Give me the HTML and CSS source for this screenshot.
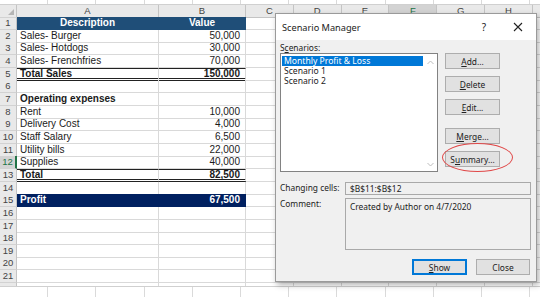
FILE: index.html
```html
<!DOCTYPE html>
<html lang="en">
<head>
    <meta charset="UTF-8">
    <title>Scenario Manager</title>
    <link rel="stylesheet" href="styles.css">
</head>
<body>
    <div class="strip"></div>
    <div class="sheet">
        <div class="row head">
            <div class="rh corner"><span class="tri"></span></div>
            <div class="c">A</div>
            <div class="c">B</div>
            <div class="rest cols">
                <span>C</span><span>D</span><span>E</span><span class="sel">F</span><span>G</span><span>H</span>
            </div>
        </div>
        <div class="row">
            <div class="rh">1</div>
            <div class="c th">Description</div>
            <div class="c th">Value</div>
            <div class="rest"></div>
        </div>
        <div class="row">
            <div class="rh">2</div>
            <div class="c">Sales- Burger</div>
            <div class="c num">50,000</div>
            <div class="rest"></div>
        </div>
        <div class="row">
            <div class="rh">3</div>
            <div class="c">Sales- Hotdogs</div>
            <div class="c num">30,000</div>
            <div class="rest"></div>
        </div>
        <div class="row">
            <div class="rh">4</div>
            <div class="c">Sales- Frenchfries</div>
            <div class="c num">70,000</div>
            <div class="rest"></div>
        </div>
        <div class="row">
            <div class="rh">5</div>
            <div class="c total">Total Sales</div>
            <div class="c num total">150,000</div>
            <div class="rest"></div>
        </div>
        <div class="row">
            <div class="rh">6</div>
            <div class="c"></div>
            <div class="c"></div>
            <div class="rest"></div>
        </div>
        <div class="row">
            <div class="rh">7</div>
            <div class="c bold">Operating expenses</div>
            <div class="c"></div>
            <div class="rest"></div>
        </div>
        <div class="row">
            <div class="rh">8</div>
            <div class="c">Rent</div>
            <div class="c num">10,000</div>
            <div class="rest"></div>
        </div>
        <div class="row">
            <div class="rh">9</div>
            <div class="c">Delivery Cost</div>
            <div class="c num">4,000</div>
            <div class="rest"></div>
        </div>
        <div class="row">
            <div class="rh">10</div>
            <div class="c">Staff Salary</div>
            <div class="c num">6,500</div>
            <div class="rest"></div>
        </div>
        <div class="row">
            <div class="rh">11</div>
            <div class="c">Utility bills</div>
            <div class="c num">22,000</div>
            <div class="rest"></div>
        </div>
        <div class="row">
            <div class="rh sel">12</div>
            <div class="c">Supplies</div>
            <div class="c num">40,000</div>
            <div class="rest"></div>
        </div>
        <div class="row">
            <div class="rh">13</div>
            <div class="c total">Total</div>
            <div class="c num total">82,500</div>
            <div class="rest"></div>
        </div>
        <div class="row">
            <div class="rh">14</div>
            <div class="c"></div>
            <div class="c"></div>
            <div class="rest"></div>
        </div>
        <div class="row">
            <div class="rh">15</div>
            <div class="c profit">Profit</div>
            <div class="c num profit">67,500</div>
            <div class="rest"></div>
        </div>
        <div class="row">
            <div class="rh">16</div>
            <div class="c"></div>
            <div class="c"></div>
            <div class="rest"></div>
        </div>
        <div class="row">
            <div class="rh">17</div>
            <div class="c"></div>
            <div class="c"></div>
            <div class="rest"></div>
        </div>
        <div class="row">
            <div class="rh">18</div>
            <div class="c"></div>
            <div class="c"></div>
            <div class="rest"></div>
        </div>
        <div class="row">
            <div class="rh">19</div>
            <div class="c"></div>
            <div class="c"></div>
            <div class="rest"></div>
        </div>
        <div class="row">
            <div class="rh">20</div>
            <div class="c"></div>
            <div class="c"></div>
            <div class="rest"></div>
        </div>
        <div class="row">
            <div class="rh">21</div>
            <div class="c"></div>
            <div class="c"></div>
            <div class="rest"></div>
        </div>
        <div class="row cut">
            <div class="rh">22</div>
            <div class="c"></div>
            <div class="c"></div>
            <div class="rest"></div>
        </div>
    </div>
    <div class="strip bottom"></div>

    <div class="dialog">
        <div class="titlebar">
            <span class="title">Scenario Manager</span>
            <span class="tb-btn">?</span>
            <span class="tb-btn">
                <svg width="10" height="10" viewBox="0 0 10 10"><path d="M1 1L9 9M9 1L1 9" stroke="#222" stroke-width="1.1" fill="none"/></svg>
            </span>
        </div>
        <div class="dlg-body">
            <div class="lbl">S<u>c</u>enarios:</div>
            <div class="main">
                <div class="listbox">
                    <div class="items">
                        <div class="item selected">Monthly Profit &amp; Loss</div>
                        <div class="item">Scenario 1</div>
                        <div class="item">Scenario 2</div>
                    </div>
                    <div class="scroll">
                        <svg width="7" height="5" viewBox="0 0 7 5"><path d="M0.5 4L3.5 1L6.5 4" stroke="#bdbdbd" fill="none"/></svg>
                        <svg width="7" height="5" viewBox="0 0 7 5"><path d="M0.5 1L3.5 4L6.5 1" stroke="#bdbdbd" fill="none"/></svg>
                    </div>
                </div>
                <div class="side">
                    <button class="btn"><u>A</u>dd...</button>
                    <button class="btn"><u>D</u>elete</button>
                    <button class="btn"><u>E</u>dit...</button>
                    <button class="btn gap"><u>M</u>erge...</button>
                    <button class="btn">S<u>u</u>mmary...</button>
                </div>
            </div>
            <div class="field-row">
                <span class="flabel">Changing cells:</span>
                <div class="field">$B$11:$B$12</div>
            </div>
            <div class="field-row comment">
                <span class="flabel">Comment:</span>
                <div class="field big">Created by Author on 4/7/2020</div>
            </div>
            <div class="footer">
                <button class="btn default"><u>S</u>how</button>
                <button class="btn">Close</button>
            </div>
        </div>
        <div class="ring"></div>
    </div>
</body>
</html>
```

FILE: styles.css
```css
body {
    margin: 0;
    width: 540px;
    height: 298px;
    overflow: hidden;
    background: #fff;
    font-family: 'Liberation Sans', Arial, sans-serif;
    color: #1a1a1a;
    position: relative;
}
.strip {
    height: 5px;
    box-sizing: border-box;
    border-bottom: 1px solid #d0d0d0;
    background: repeating-linear-gradient(to right, transparent 0 47.2px, #dadada 47.2px 48.2px);
}
.strip.bottom {
    height: 11px;
    border-bottom: none;
    border-top: 1px solid #d0d0d0;
}
.row {
    display: grid;
    grid-template-columns: 17px 142px 87px 1fr;
    height: 12.67px;
    font-size: 10px;
    line-height: 12px;
}
.row.cut {
    height: 3.3px;
    overflow: hidden;
}
.row.head {
    height: 12px;
}
.rh {
    background: #e9e9e9;
    color: #444;
    text-align: center;
    border-right: 1px solid #c4c4c4;
    border-bottom: 1px solid #d2d2d2;
    box-sizing: border-box;
    font-size: 9.5px;
}
.rh.sel {
    background: #d3d3d3;
    color: #217346;
    border-right: 2px solid #217346;
}
.corner {
    position: relative;
    background: #e9e9e9;
}
.tri {
    position: absolute;
    right: 2px;
    bottom: 2px;
    border-left: 6px solid transparent;
    border-bottom: 6px solid #b5b5b5;
}
.c {
    border-right: 1px solid #d9d9d9;
    border-bottom: 1px solid #d9d9d9;
    box-sizing: border-box;
    padding: 0 3px;
    white-space: nowrap;
    overflow: hidden;
}
.head .c {
    background: #e9e9e9;
    color: #444;
    text-align: center;
    border-right-color: #c4c4c4;
    border-bottom-color: #c4c4c4;
    font-size: 9.5px;
}
.rest {
    border-bottom: 1px solid #d9d9d9;
    box-sizing: border-box;
    background: repeating-linear-gradient(to right, transparent 0 46.8px, #d9d9d9 46.8px 47.8px);
}
.cols {
    display: flex;
    background: #e9e9e9;
    border-bottom-color: #c4c4c4;
    font-size: 9.5px;
    color: #444;
}
.cols span {
    flex: 0 0 47.8px;
    box-sizing: border-box;
    border-right: 1px solid #c4c4c4;
    text-align: center;
}
.cols span.sel {
    background: #d3d3d3;
    color: #217346;
}
.num {
    text-align: right;
    padding-right: 5px;
}
.bold {
    font-weight: bold;
}
.th {
    background: #1f4e78;
    color: #fff;
    font-weight: bold;
    text-align: center;
    border-color: #1f4e78;
}
.total {
    font-weight: bold;
    border-top: 1px solid #222;
    border-bottom: 3px double #222;
    line-height: 9px;
}
.profit {
    background: #002060;
    color: #fff;
    font-weight: bold;
    border-color: #002060;
}

/* dialog */
.dialog {
    position: absolute;
    left: 275px;
    top: 13px;
    width: 262px;
    height: 269px;
    box-sizing: border-box;
    border: 1px solid #9a9a9a;
    background: #f0f0f0;
    box-shadow: 2px 3px 6px rgba(0, 0, 0, 0.3);
    font-family: 'Noto Sans', 'Open Sans', sans-serif;
    font-size: 8.4px;
    color: #222;
    display: flex;
    flex-direction: column;
}
.titlebar {
    height: 26px;
    background: #fff;
    display: flex;
    align-items: center;
    padding: 0 8px 0 6px;
    flex: none;
}
.title {
    font-size: 9.2px;
    flex: 1;
}
.tb-btn {
    width: 20px;
    display: flex;
    justify-content: center;
    font-size: 10px;
}
.tb-btn + .tb-btn {
    margin-left: 14px;
}
.dlg-body {
    padding: 0 5px 0 4px;
}
.lbl {
    margin-top: 2px;
    height: 11px;
    line-height: 11px;
}
.main {
    display: flex;
    gap: 7px;
}
.listbox {
    width: 158px;
    height: 119px;
    box-sizing: border-box;
    border: 1px solid #828282;
    background: #fff;
    display: flex;
}
.items {
    flex: 1;
    padding: 2px 0 0 1px;
}
.item {
    height: 10px;
    line-height: 10px;
    padding-left: 2px;
    font-size: 8.6px;
    white-space: nowrap;
}
.item.selected {
    background: #0078d7;
    color: #fff;
}
.scroll {
    width: 14px;
    display: flex;
    flex-direction: column;
    justify-content: space-between;
    align-items: center;
    padding: 6px 0 4px;
}
.side {
    display: flex;
    flex-direction: column;
    gap: 7px;
}
.btn {
    width: 55px;
    height: 16px;
    box-sizing: border-box;
    border: 1px solid #adadad;
    background: #e1e1e1;
    font-family: inherit;
    font-size: 8.4px;
    color: #222;
    padding: 0;
    line-height: 13px;
}
.btn.gap {
    margin-top: 6px;
}
.field-row {
    display: flex;
    margin-top: 10px;
}
.field-row.comment {
    margin-top: 3px;
}
.flabel {
    width: 65px;
    flex: none;
    line-height: 12px;
}
.field {
    flex: 1;
    height: 13px;
    box-sizing: border-box;
    border: 1px solid #a9a9a9;
    background: #f0f0f0;
    padding: 0 4px;
    line-height: 11px;
}
.field.big {
    height: 52px;
    padding-top: 2px;
}
.footer {
    display: flex;
    justify-content: flex-end;
    gap: 9px;
    margin-top: 9px;
    padding-right: 1px;
}
.footer .btn + .btn {
    width: 54px;
}
.btn.default {
    border: 1px solid #0078d7;
    box-shadow: inset 0 0 0 1px #0078d7;
}
.ring {
    position: absolute;
    left: 166px;
    top: 129px;
    width: 71px;
    height: 29px;
    box-sizing: border-box;
    border: 1px solid #e04848;
    border-radius: 50%;
}
```
